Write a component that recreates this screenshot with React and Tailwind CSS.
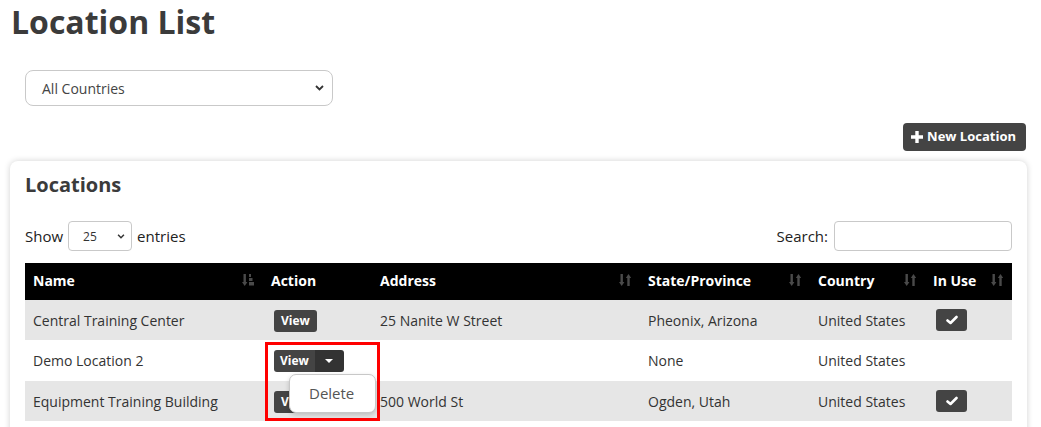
import React from "react";

const F = { fontFamily: '"Open Sans", "Liberation Sans", sans-serif' };

function SortIcon({ active }) {
  return (
    <svg width="12" height="14" viewBox="0 0 12 14" className="shrink-0">
      <rect x="1.5" y="1" width="2.4" height="9" fill="#4a4a4a" />
      <polygon points="0,9 5.4,9 2.7,13" fill="#4a4a4a" />
      {active ? (
        <g fill="#4a4a4a">
          <rect x="7" y="1" width="2" height="3" />
          <rect x="7" y="5" width="3.5" height="3" />
          <rect x="7" y="9" width="5" height="3.5" />
        </g>
      ) : (
        <g fill="#4a4a4a">
          <rect x="8.3" y="4" width="2.4" height="9" />
          <polygon points="6.8,5 12.2,5 9.5,1" />
        </g>
      )}
    </svg>
  );
}

function Check() {
  return (
    <span className="inline-flex items-center justify-center w-[31px] h-[22px] rounded-[3px] bg-[#444]">
      <svg width="12" height="10" viewBox="0 0 12 10">
        <path d="M1.5 5.5 L4.5 8 L10.5 2" stroke="#fff" strokeWidth="2.6" fill="none" strokeLinecap="round" strokeLinejoin="round" />
      </svg>
    </span>
  );
}

function ViewBtn() {
  return (
    <span className="inline-flex items-center h-[22px] px-[7px] rounded-[3px] bg-[#444] text-white text-[12px] font-bold">View</span>
  );
}

const headers = [
  { t: "Name", w: "w-[238px]", s: "active" },
  { t: "Action", w: "w-[109px]", s: null },
  { t: "Address", w: "w-[268px]", s: "x" },
  { t: "State/Province", w: "w-[170px]", s: "x" },
  { t: "Country", w: "w-[115px]", s: "x" },
  { t: "In Use", w: "flex-1", s: "x" },
];

export default function App() {
  return (
    <div style={F} className="w-[1041px] h-[427px] overflow-hidden bg-white text-[#333]">
      <div className="px-[10px]">
        <h1 className="text-[32px] font-bold text-[#3b3b3b] leading-[44px] pl-[1px] pt-0">Location List</h1>
        <div className="pt-[26px] pl-[15px]">
          <div className="w-[308px] h-[36px] rounded-[8px] border border-[#c9c9c9] flex items-center justify-between pl-[16px] pr-[8px] text-[14px] text-[#444]">
            <span>All Countries</span>
            <svg width="9" height="6" viewBox="0 0 9 6"><path d="M1 1 L4.5 4.5 L8 1" stroke="#333" strokeWidth="1.8" fill="none" /></svg>
          </div>
        </div>
        <div className="flex justify-end pr-[5px] mt-[17px]">
          <div className="h-[28px] rounded-[4px] bg-[#444] text-white text-[13px] font-bold flex items-center gap-[4px] pl-[8px] pr-[10px]">
            <svg width="12" height="12" viewBox="0 0 12 12"><path d="M4.3 0h3.4v4.3H12v3.4H7.7V12H4.3V7.7H0V4.3h4.3z" fill="#fff" /></svg>
            <span>New Location</span>
          </div>
        </div>
        <div className="mt-[10px] w-[1017px] rounded-[8px] bg-white shadow-[0_0_6px_rgba(0,0,0,0.18)] px-[15px] pt-[10px] pb-[20px]">
          <h2 className="text-[20px] font-bold text-[#3b3b3b] leading-[28px]">Locations</h2>
          <div className="flex items-center justify-between mt-[22px] text-[15px] text-[#222]">
            <div className="flex items-center gap-[5px]">
              <span>Show</span>
              <div className="w-[64px] h-[30px] rounded-[4px] border border-[#c9c9c9] flex items-center justify-between pl-[14px] pr-[6px] text-[12px] text-[#333]">
                <span className="mt-[2px]">25</span>
                <svg width="8" height="5" viewBox="0 0 9 6"><path d="M1 1 L4.5 4.5 L8 1" stroke="#333" strokeWidth="1.8" fill="none" /></svg>
              </div>
              <span>entries</span>
            </div>
            <div className="flex items-center gap-[6px]">
              <span>Search:</span>
              <div className="w-[178px] h-[30px] rounded-[4px] border border-[#c9c9c9]" />
            </div>
          </div>
          <div className="mt-[12px] text-[14px]">
            <div className="flex h-[37px] bg-black text-white font-bold">
              {headers.map((h) => (
                <div key={h.t} className={`${h.w} flex items-center justify-between pl-[8px] pr-[9px] pb-[3px]`}>
                  <span>{h.t}</span>
                  {h.s && <SortIcon active={h.s === "active"} />}
                </div>
              ))}
            </div>
            <div className="flex h-[40px] items-center bg-[#e6e6e6]">
              <div className="w-[238px] pl-[8px]">Central Training Center</div>
              <div className="w-[109px] pl-[11px]"><ViewBtn /></div>
              <div className="w-[268px] pl-[8px]">25 Nanite W Street</div>
              <div className="w-[170px] pl-[8px]">Pheonix, Arizona</div>
              <div className="w-[115px] pl-[8px]">United States</div>
              <div className="flex-1 pl-[11px] flex"><Check /></div>
            </div>
            <div className="flex h-[41px] items-center bg-white relative">
              <div className="w-[238px] pl-[8px]">Demo Location 2</div>
              <div className="w-[109px] pl-[11px]">
                <span className="inline-flex h-[22px] rounded-[3px] overflow-hidden text-white text-[12px] font-bold">
                  <span className="bg-[#444] pl-[6px] pr-[6px] flex items-center">View</span>
                  <span className="bg-[#333] w-[29px] flex items-center justify-center">
                    <svg width="8" height="4" viewBox="0 0 8 4"><path d="M0 0h8L4 4z" fill="#fff" /></svg>
                  </span>
                </span>
              </div>
              <div className="w-[268px] pl-[8px]"></div>
              <div className="w-[170px] pl-[8px]">None</div>
              <div className="w-[115px] pl-[8px]">United States</div>
              <div className="flex-1"></div>
            </div>
            <div className="flex h-[40px] items-center bg-[#e6e6e6]">
              <div className="w-[238px] pl-[8px]">Equipment Training Building</div>
              <div className="w-[109px] pl-[11px] relative">
                <ViewBtn />
                <div className="absolute left-[2px] top-[-48px] w-[115px] h-[79px] border-[3px] border-[#ff0000]" />
                <div className="absolute left-[26px] top-[-16px] w-[87px] h-[39px] rounded-[7px] bg-white border border-[#c8c8c8] shadow-[0_2px_5px_rgba(0,0,0,0.18)] flex items-center pl-[19px] text-[15px] text-[#555]">Delete</div>
              </div>
              <div className="w-[268px] pl-[8px]">500 World St</div>
              <div className="w-[170px] pl-[8px]">Ogden, Utah</div>
              <div className="w-[115px] pl-[8px]">United States</div>
              <div className="flex-1 pl-[11px] flex"><Check /></div>
            </div>
          </div>
        </div>
      </div>
    </div>
  );
}
